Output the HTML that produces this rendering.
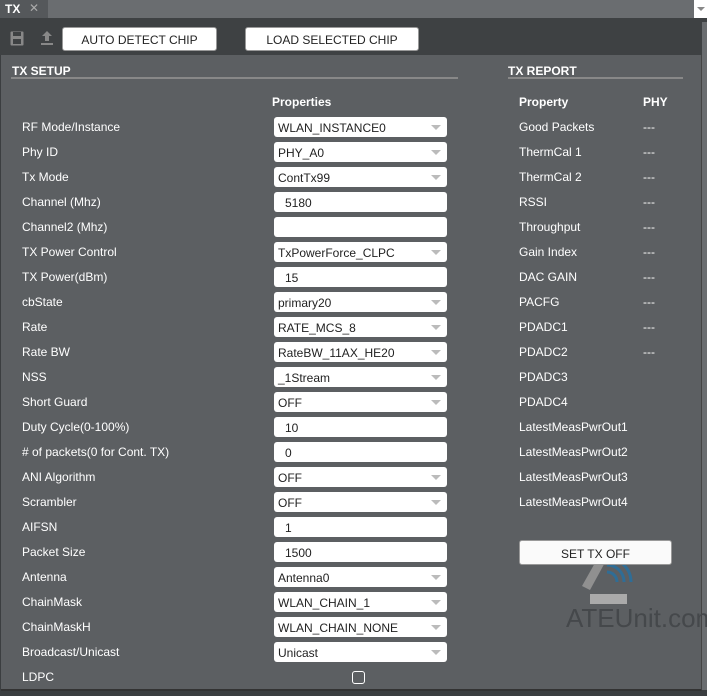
<!DOCTYPE html>
<html><head><style>
body{margin:0;width:707px;height:696px;background:#3b3e40;font-family:"Liberation Sans",Arial,sans-serif;overflow:hidden;position:relative}
.a{position:absolute}
.tabbar{left:0;top:0;width:707px;height:18px;background:#6a6d70}
.tab{left:0;top:0;width:48px;height:18px;background:#55585b;color:#fff;font-size:12px;font-weight:bold}
.tool{left:0;top:18px;width:707px;height:37px;background:#3e4143}
.panel{left:1px;top:55px;width:700px;height:634px;background:#5c5f62;border-right:1px solid #444;border-bottom:2px solid #333}
.btn{background:#fff;border-radius:3px;border:1px solid #999;font-size:12px;color:#222;text-align:center;box-sizing:border-box}
.lbl{color:#fff;font-size:12px;left:22px}
.r{color:#fff;font-size:12px}
.in{left:274px;width:173px;height:20px;background:#fff;border-radius:3px;box-sizing:border-box;font-size:12px;color:#222;padding:4px 0 0 4px}
.in.t{padding-left:11px}
.in .c{position:absolute;right:6px;top:8px;border-left:5px solid transparent;border-right:5px solid transparent;border-top:5px solid #bbb;width:0;height:0}
.h{color:#fff;font-size:12px;font-weight:bold}
.line{height:2px;background:#888}
</style></head><body>
<div class="a tabbar"></div>
<div class="a tab"><span class="a" style="left:5px;top:2px">TX</span><span class="a" style="left:29px;top:1px;color:#aaa;font-weight:normal">✕</span></div>
<div class="a" style="left:694px;top:0;width:13px;height:18px;background:#fff"><span class="a" style="left:3px;top:7px;border-left:4px solid transparent;border-right:4px solid transparent;border-top:4px solid #888"></span></div>
<div class="a tool"></div>
<svg class="a" style="left:10px;top:31px" width="14" height="15"><rect x="0.5" y="0.5" width="13" height="14" rx="1" fill="#888"/><rect x="3" y="1" width="8" height="4" fill="#3e4143"/><rect x="3" y="8" width="8" height="5" fill="#3e4143"/></svg>
<svg class="a" style="left:40px;top:30px" width="14" height="16"><path d="M7 1 L12 6 H9 V11 H5 V6 H2 Z" fill="#888"/><rect x="1" y="13" width="12" height="2" fill="#888"/></svg>
<div class="a btn" style="left:62px;top:27px;width:155px;height:24px;padding-top:5px">AUTO DETECT CHIP</div>
<div class="a btn" style="left:245px;top:27px;width:174px;height:24px;padding-top:5px">LOAD SELECTED CHIP</div>
<div class="a panel"></div>
<div class="a" style="left:702px;top:22px;width:5px;height:668px;background:#6a6d70"></div>
<div class="a h" style="left:12px;top:64px">TX SETUP</div>
<div class="a line" style="left:11px;top:77px;width:447px"></div>
<div class="a h" style="left:508px;top:64px">TX REPORT</div>
<div class="a line" style="left:508px;top:77px;width:175px"></div>
<div class="a h" style="left:272px;top:95px">Properties</div>
<div class="a h" style="left:519px;top:95px">Property</div>
<div class="a h" style="left:643px;top:95px">PHY</div>

<div class="a lbl" style="top:120px">RF Mode/Instance</div><div class="a in" style="top:117px">WLAN_INSTANCE0<i class="c"></i></div>
<div class="a lbl" style="top:145px">Phy ID</div><div class="a in" style="top:142px">PHY_A0<i class="c"></i></div>
<div class="a lbl" style="top:170px">Tx Mode</div><div class="a in" style="top:167px">ContTx99<i class="c"></i></div>
<div class="a lbl" style="top:195px">Channel (Mhz)</div><div class="a in t" style="top:192px">5180</div>
<div class="a lbl" style="top:220px">Channel2 (Mhz)</div><div class="a in t" style="top:217px"></div>
<div class="a lbl" style="top:245px">TX Power Control</div><div class="a in" style="top:242px">TxPowerForce_CLPC<i class="c"></i></div>
<div class="a lbl" style="top:270px">TX Power(dBm)</div><div class="a in t" style="top:267px">15</div>
<div class="a lbl" style="top:295px">cbState</div><div class="a in" style="top:292px">primary20<i class="c"></i></div>
<div class="a lbl" style="top:320px">Rate</div><div class="a in" style="top:317px">RATE_MCS_8<i class="c"></i></div>
<div class="a lbl" style="top:345px">Rate BW</div><div class="a in" style="top:342px">RateBW_11AX_HE20<i class="c"></i></div>
<div class="a lbl" style="top:370px">NSS</div><div class="a in" style="top:367px">_1Stream<i class="c"></i></div>
<div class="a lbl" style="top:395px">Short Guard</div><div class="a in" style="top:392px">OFF<i class="c"></i></div>
<div class="a lbl" style="top:420px">Duty Cycle(0-100%)</div><div class="a in t" style="top:417px">10</div>
<div class="a lbl" style="top:445px"># of packets(0 for Cont. TX)</div><div class="a in t" style="top:442px">0</div>
<div class="a lbl" style="top:470px">ANI Algorithm</div><div class="a in" style="top:467px">OFF<i class="c"></i></div>
<div class="a lbl" style="top:495px">Scrambler</div><div class="a in" style="top:492px">OFF<i class="c"></i></div>
<div class="a lbl" style="top:520px">AIFSN</div><div class="a in t" style="top:517px">1</div>
<div class="a lbl" style="top:545px">Packet Size</div><div class="a in t" style="top:542px">1500</div>
<div class="a lbl" style="top:570px">Antenna</div><div class="a in" style="top:567px">Antenna0<i class="c"></i></div>
<div class="a lbl" style="top:595px">ChainMask</div><div class="a in" style="top:592px">WLAN_CHAIN_1<i class="c"></i></div>
<div class="a lbl" style="top:620px">ChainMaskH</div><div class="a in" style="top:617px">WLAN_CHAIN_NONE<i class="c"></i></div>
<div class="a lbl" style="top:645px">Broadcast/Unicast</div><div class="a in" style="top:642px">Unicast<i class="c"></i></div>
<div class="a lbl" style="top:670px">LDPC</div>
<div class="a" style="left:352px;top:671px;width:11px;height:11px;border:1px solid #fff;border-radius:3px"></div>

<div class="a r" style="left:519px;top:120px">Good Packets</div><div class="a r" style="left:643px;top:120px">---</div>
<div class="a r" style="left:519px;top:145px">ThermCal 1</div><div class="a r" style="left:643px;top:145px">---</div>
<div class="a r" style="left:519px;top:170px">ThermCal 2</div><div class="a r" style="left:643px;top:170px">---</div>
<div class="a r" style="left:519px;top:195px">RSSI</div><div class="a r" style="left:643px;top:195px">---</div>
<div class="a r" style="left:519px;top:220px">Throughput</div><div class="a r" style="left:643px;top:220px">---</div>
<div class="a r" style="left:519px;top:245px">Gain Index</div><div class="a r" style="left:643px;top:245px">---</div>
<div class="a r" style="left:519px;top:270px">DAC GAIN</div><div class="a r" style="left:643px;top:270px">---</div>
<div class="a r" style="left:519px;top:295px">PACFG</div><div class="a r" style="left:643px;top:295px">---</div>
<div class="a r" style="left:519px;top:320px">PDADC1</div><div class="a r" style="left:643px;top:320px">---</div>
<div class="a r" style="left:519px;top:345px">PDADC2</div><div class="a r" style="left:643px;top:345px">---</div>
<div class="a r" style="left:519px;top:370px">PDADC3</div>
<div class="a r" style="left:519px;top:395px">PDADC4</div>
<div class="a r" style="left:519px;top:420px">LatestMeasPwrOut1</div>
<div class="a r" style="left:519px;top:445px">LatestMeasPwrOut2</div>
<div class="a r" style="left:519px;top:470px">LatestMeasPwrOut3</div>
<div class="a r" style="left:519px;top:495px">LatestMeasPwrOut4</div>
<svg class="a" style="left:575px;top:550px" width="80" height="50">
<path d="M25 4 L33 7 L15 40 L7 36 Z" fill="#999" opacity="0.85"/>
<path d="M32 22 A10 10 0 0 1 42 32" stroke="#2f6d96" stroke-width="3" fill="none"/>
<path d="M32 15 A17 17 0 0 1 49 32" stroke="#2f6d96" stroke-width="3" fill="none"/>
<path d="M32 8 A24 24 0 0 1 56 32" stroke="#2f6d96" stroke-width="3" fill="none"/>
</svg>
<div class="a btn" style="left:519px;top:540px;width:153px;height:25px;padding-top:6px;background:rgba(255,255,255,0.97)">SET TX OFF</div>
<div class="a" style="left:590px;top:594px;width:37px;height:10px;background:#aaa"></div>
<div class="a" style="left:566px;top:603px;font-size:26px;color:#45484b">ATEUnit.com</div>
</body></html>
